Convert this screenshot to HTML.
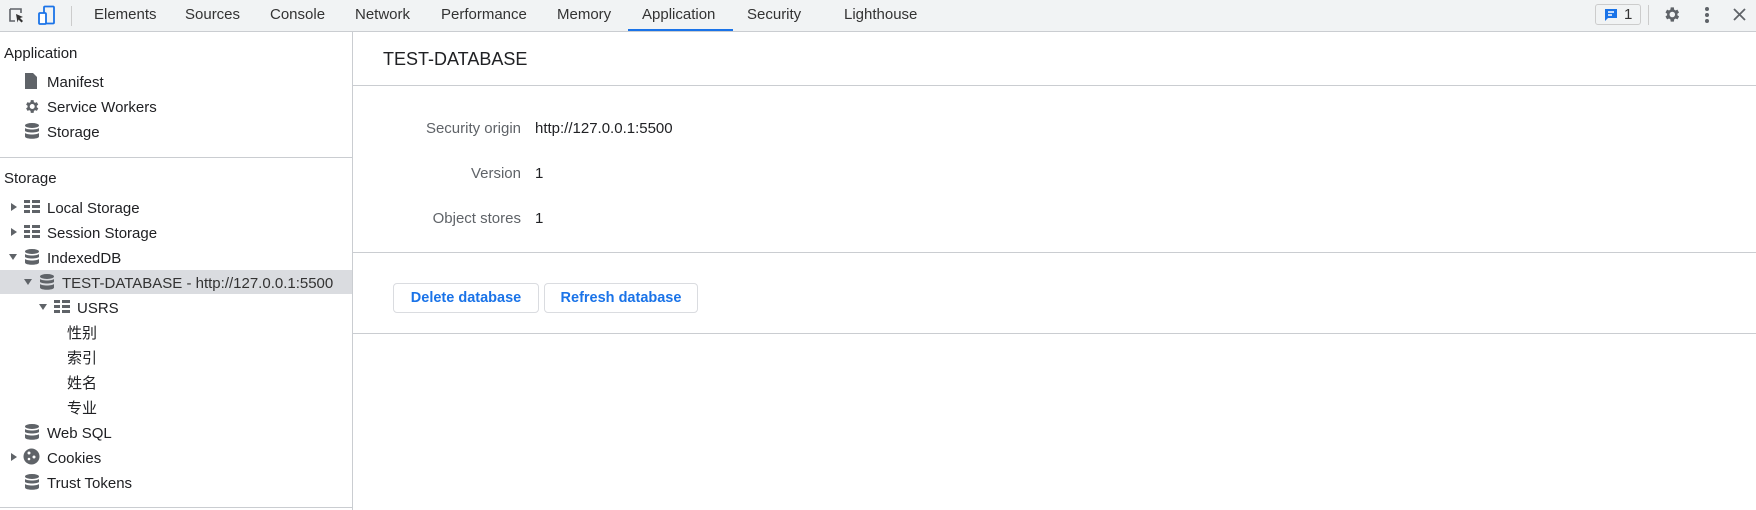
<!DOCTYPE html>
<html><head><meta charset="utf-8"><style>
*{margin:0;padding:0;box-sizing:border-box}
body{width:1756px;height:510px;overflow:hidden;background:#fff;font-family:"Liberation Sans","Noto Sans CJK SC",sans-serif;font-size:15px;color:#202124;position:relative}
.tb{position:absolute;left:0;top:0;width:1756px;height:32px;background:#f1f3f4;border-bottom:1px solid #cacdd1}
.tab{position:absolute;top:6px;font-size:15px;color:#333}
.a{position:absolute;white-space:nowrap}
.sb{position:absolute;left:352px;top:32px;width:1px;height:478px;background:#cacdd1}
.hl{position:absolute;left:0;top:270px;width:352px;height:24px;background:#dadce0}
.hr{position:absolute;height:1px;background:#cacdd1}
.lbl{position:absolute;right:1235px;color:#5f6368;white-space:nowrap}
.btn{position:absolute;top:283px;height:30px;border:1px solid #dadce0;border-radius:4px;color:#1a73e8;font-weight:bold;font-size:14.5px;text-align:center;line-height:28px;background:#fff}
.tri{position:absolute;width:0;height:0}
.r{border-top:4px solid transparent;border-bottom:4px solid transparent;border-left:6px solid #5f6368}
.d{border-left:4px solid transparent;border-right:4px solid transparent;border-top:6px solid #5f6368}
.cj{margin-top:-2px}
</style></head><body>
<div class="tb">
<svg class="a" style="left:8px;top:7px" width="18" height="18" viewBox="0 0 18 18"><path d="M2 2h11v4M2 2v12h5" fill="none" stroke="#5f6368" stroke-width="1.6"/><path d="M8 7l7 3-3 1 3 3-1.5 1.5-3-3-1 3z" fill="#333"/></svg>
<svg class="a" style="left:37px;top:5px" width="20" height="22" viewBox="0 0 20 22"><rect x="7" y="1.5" width="10" height="17" rx="1" fill="none" stroke="#1a73e8" stroke-width="1.8"/><rect x="2" y="8" width="7" height="11" rx="1" fill="#fff" stroke="#1a73e8" stroke-width="1.8"/></svg>
<div class="a" style="left:71px;top:6px;width:1px;height:20px;background:#ccc"></div>
<span class="tab" style="left:94px">Elements</span>
<span class="tab" style="left:185px">Sources</span>
<span class="tab" style="left:270px">Console</span>
<span class="tab" style="left:355px">Network</span>
<span class="tab" style="left:441px">Performance</span>
<span class="tab" style="left:557px">Memory</span>
<span class="tab" style="left:642px">Application</span>
<div class="a" style="left:628px;top:29px;width:105px;height:2px;background:#1a73e8"></div>
<span class="tab" style="left:747px">Security</span>
<span class="tab" style="left:844px">Lighthouse</span>
<div class="a" style="left:1595px;top:4px;width:46px;height:21px;border:1px solid #ccc;border-radius:3px"></div>
<svg class="a" style="left:1604px;top:8px" width="14" height="14" viewBox="0 0 14 14"><path d="M1 1h12v9H4l-3 3z" fill="#1a73e8"/><path d="M4 4h6M4 7h4" stroke="#fff" stroke-width="1.4"/></svg>
<span class="a" style="left:1624px;top:6px;color:#333">1</span>
<div class="a" style="left:1648px;top:5px;width:1px;height:20px;background:#ccc"></div>
<svg class="a" style="left:1662px;top:5px" width="19" height="19" viewBox="0 0 24 24"><path fill="#5f6368" d="M19.4 13a7.5 7.5 0 0 0 0-2l2.1-1.6-2-3.5-2.5 1a7 7 0 0 0-1.7-1L15 3h-4l-.4 2.9a7 7 0 0 0-1.7 1l-2.5-1-2 3.5L6.5 11a7.5 7.5 0 0 0 0 2l-2.1 1.6 2 3.5 2.5-1a7 7 0 0 0 1.7 1L11 21h4l.4-2.9a7 7 0 0 0 1.7-1l2.5 1 2-3.5zM13 15.5a3.5 3.5 0 1 1 0-7 3.5 3.5 0 0 1 0 7z"/></svg>
<div class="a" style="left:1705px;top:7px;width:4px;height:4px;border-radius:2px;background:#5f6368;box-shadow:0 6px 0 #5f6368,0 12px 0 #5f6368"></div>
<svg class="a" style="left:1733px;top:8px" width="13" height="13" viewBox="0 0 13 13"><path d="M1 1l11 11M12 1L1 12" stroke="#5f6368" stroke-width="1.8"/></svg>
</div>
<div class="sb"></div>
<div class="hl"></div>
<div class="a" style="left:4px;top:45px">Application</div>
<svg class="a" style="left:25px;top:73px" width="12" height="16" viewBox="0 0 12 16"><path d="M0 0h8l4 4v12H0z" fill="#5f6368"/></svg>
<div class="a" style="left:47px;top:74px">Manifest</div>
<svg class="a" style="left:23px;top:98px" width="17" height="17" viewBox="0 0 24 24"><path fill="#5f6368" d="M19.4 13a7.5 7.5 0 0 0 0-2l2.1-1.6-2-3.5-2.5 1a7 7 0 0 0-1.7-1L15 3h-4l-.4 2.9a7 7 0 0 0-1.7 1l-2.5-1-2 3.5L6.5 11a7.5 7.5 0 0 0 0 2l-2.1 1.6 2 3.5 2.5-1a7 7 0 0 0 1.7 1L11 21h4l.4-2.9a7 7 0 0 0 1.7-1l2.5 1 2-3.5zM13 15.5a3.5 3.5 0 1 1 0-7 3.5 3.5 0 0 1 0 7z"/></svg>
<div class="a" style="left:47px;top:99px">Service Workers</div>
<div class="a" style="left:47px;top:124px">Storage</div>
<div class="hr" style="left:0;top:157px;width:352px"></div>
<div class="a" style="left:4px;top:170px">Storage</div>
<div class="a" style="left:47px;top:200px">Local Storage</div>
<div class="a" style="left:47px;top:225px">Session Storage</div>
<div class="a" style="left:47px;top:250px">IndexedDB</div>
<div class="a" style="left:62px;top:275px;color:#333">TEST-DATABASE - http://127.0.0.1:5500</div>
<div class="a" style="left:77px;top:300px">USRS</div>
<div class="a" style="left:67px;top:322px">性别</div>
<div class="a" style="left:67px;top:347px">索引</div>
<div class="a" style="left:67px;top:372px">姓名</div>
<div class="a" style="left:67px;top:397px">专业</div>
<div class="a" style="left:47px;top:425px">Web SQL</div>
<div class="a" style="left:47px;top:450px">Cookies</div>
<div class="a" style="left:47px;top:475px">Trust Tokens</div>
<div class="hr" style="left:0;top:507px;width:352px"></div>
<div class="tri r" style="left:11px;top:203px"></div>
<div class="tri r" style="left:11px;top:228px"></div>
<div class="tri d" style="left:9px;top:254px"></div>
<div class="tri d" style="left:24px;top:279px"></div>
<div class="tri d" style="left:39px;top:304px"></div>
<div class="tri r" style="left:11px;top:453px"></div>
<svg class="a" style="left:24px;top:200px" width="16" height="14"><g fill="#5f6368"><rect x="0" y="0" width="6" height="3"/><rect x="8" y="0" width="8" height="3"/><rect x="0" y="5" width="6" height="3"/><rect x="8" y="5" width="8" height="3"/><rect x="0" y="10" width="6" height="3"/><rect x="8" y="10" width="8" height="3"/></g></svg>
<svg class="a" style="left:24px;top:225px" width="16" height="14"><g fill="#5f6368"><rect x="0" y="0" width="6" height="3"/><rect x="8" y="0" width="8" height="3"/><rect x="0" y="5" width="6" height="3"/><rect x="8" y="5" width="8" height="3"/><rect x="0" y="10" width="6" height="3"/><rect x="8" y="10" width="8" height="3"/></g></svg>
<svg class="a" style="left:54px;top:300px" width="16" height="14"><g fill="#5f6368"><rect x="0" y="0" width="6" height="3"/><rect x="8" y="0" width="8" height="3"/><rect x="0" y="5" width="6" height="3"/><rect x="8" y="5" width="8" height="3"/><rect x="0" y="10" width="6" height="3"/><rect x="8" y="10" width="8" height="3"/></g></svg>
<svg class="a" style="left:25px;top:123px" width="14" height="16" viewBox="0 0 14 16"><g fill="#5f6368"><ellipse cx="7" cy="2.5" rx="7" ry="2.5"/><path d="M0 5c2 2 12 2 14 0v3c-2 2-12 2-14 0zM0 10c2 2 12 2 14 0v3.5c0 3-14 3-14 0z"/></g></svg>
<svg class="a" style="left:25px;top:249px" width="14" height="16" viewBox="0 0 14 16"><g fill="#5f6368"><ellipse cx="7" cy="2.5" rx="7" ry="2.5"/><path d="M0 5c2 2 12 2 14 0v3c-2 2-12 2-14 0zM0 10c2 2 12 2 14 0v3.5c0 3-14 3-14 0z"/></g></svg>
<svg class="a" style="left:40px;top:274px" width="14" height="16" viewBox="0 0 14 16"><g fill="#5f6368"><ellipse cx="7" cy="2.5" rx="7" ry="2.5"/><path d="M0 5c2 2 12 2 14 0v3c-2 2-12 2-14 0zM0 10c2 2 12 2 14 0v3.5c0 3-14 3-14 0z"/></g></svg>
<svg class="a" style="left:25px;top:424px" width="14" height="16" viewBox="0 0 14 16"><g fill="#5f6368"><ellipse cx="7" cy="2.5" rx="7" ry="2.5"/><path d="M0 5c2 2 12 2 14 0v3c-2 2-12 2-14 0zM0 10c2 2 12 2 14 0v3.5c0 3-14 3-14 0z"/></g></svg>
<svg class="a" style="left:25px;top:474px" width="14" height="16" viewBox="0 0 14 16"><g fill="#5f6368"><ellipse cx="7" cy="2.5" rx="7" ry="2.5"/><path d="M0 5c2 2 12 2 14 0v3c-2 2-12 2-14 0zM0 10c2 2 12 2 14 0v3.5c0 3-14 3-14 0z"/></g></svg>
<svg class="a" style="left:23px;top:448px" width="17" height="17" viewBox="0 0 17 17"><circle cx="8.5" cy="8.5" r="8" fill="#5f6368"/><g fill="#fff"><circle cx="6" cy="5" r="1.5"/><circle cx="11" cy="9" r="1.5"/><circle cx="6" cy="11" r="1.3"/></g></svg>
<div class="a" style="left:383px;top:49px;font-size:18px;color:#202124">TEST-DATABASE</div>
<div class="hr" style="left:353px;top:85px;width:1403px"></div>
<div class="lbl" style="top:120px">Security origin</div>
<div class="a" style="left:535px;top:120px">http://127.0.0.1:5500</div>
<div class="lbl" style="top:165px">Version</div>
<div class="a" style="left:535px;top:165px">1</div>
<div class="lbl" style="top:210px">Object stores</div>
<div class="a" style="left:535px;top:210px">1</div>
<div class="hr" style="left:353px;top:252px;width:1403px"></div>
<div class="btn" style="left:393px;width:146px">Delete database</div>
<div class="btn" style="left:544px;width:154px">Refresh database</div>
<div class="hr" style="left:353px;top:333px;width:1403px"></div>
</body></html>
